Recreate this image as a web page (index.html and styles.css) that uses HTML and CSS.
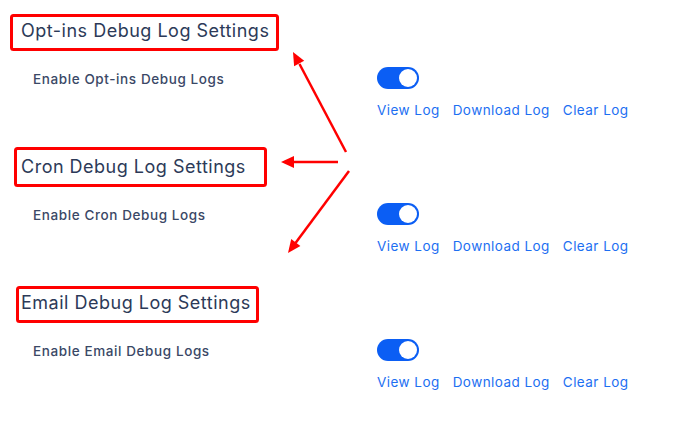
FILE: index.html
```html
<!DOCTYPE html>
<html lang="en">
<head>
<meta charset="utf-8">
<title>Debug Log Settings</title>
<link rel="stylesheet" href="styles.css">
</head>
<body>
<main class="page">
  <section class="group">
    <h2 class="group-title">Opt-ins Debug Log Settings</h2>
    <div class="setting">
      <span class="setting-label">Enable Opt-ins Debug Logs</span>
      <div class="setting-control">
        <span class="toggle is-on"><span class="knob"></span></span>
        <div class="log-links"><a href="#">View Log</a><a href="#">Download Log</a><a href="#">Clear Log</a></div>
      </div>
    </div>
  </section>
  <section class="group">
    <h2 class="group-title">Cron Debug Log Settings</h2>
    <div class="setting">
      <span class="setting-label">Enable Cron Debug Logs</span>
      <div class="setting-control">
        <span class="toggle is-on"><span class="knob"></span></span>
        <div class="log-links"><a href="#">View Log</a><a href="#">Download Log</a><a href="#">Clear Log</a></div>
      </div>
    </div>
  </section>
  <section class="group">
    <h2 class="group-title">Email Debug Log Settings</h2>
    <div class="setting">
      <span class="setting-label">Enable Email Debug Logs</span>
      <div class="setting-control">
        <span class="toggle is-on"><span class="knob"></span></span>
        <div class="log-links"><a href="#">View Log</a><a href="#">Download Log</a><a href="#">Clear Log</a></div>
      </div>
    </div>
  </section>

  <svg class="annotations" width="693" height="430" viewBox="0 0 693 430" aria-hidden="true">
    <g fill="none" stroke="#ff0000" stroke-width="3">
      <rect x="11.5" y="15.5" width="266" height="34" rx="2"/>
      <rect x="15.5" y="148.5" width="250" height="37" rx="2"/>
      <rect x="17.5" y="287.5" width="240" height="34" rx="2"/>
    </g>
    <g stroke="#ff0000" stroke-width="2.5" stroke-linecap="butt">
      <line x1="346" y1="152" x2="299.5" y2="64"/>
      <line x1="338" y1="162" x2="293" y2="162"/>
      <line x1="349" y1="171" x2="295.5" y2="243"/>
    </g>
    <g fill="#ff0000">
      <polygon points="293,52 304.2,60.8 294.1,66.2"/>
      <polygon points="281,162 294,156 294,168"/>
      <polygon points="288,253 300.4,246 291.2,239"/>
    </g>
  </svg>
</main>
</body>
</html>
```

FILE: styles.css
```css
* { box-sizing: border-box; }

html, body {
  margin: 0;
  background: #ffffff;
}

body {
  font-family: "Inter", "Open Sans", "Liberation Sans", sans-serif;
  color: #2f3b57;
}

.page {
  position: relative;
  width: 693px;
  height: 430px;
  padding-top: 17px;
}

.group {
  margin-bottom: 33px;
}

.group-title {
  margin: 0 0 22px 21px;
  font-size: 18px;
  line-height: 28px;
  font-weight: 400;
  letter-spacing: 0.5px;
  color: #2c3a58;
}

.setting {
  display: flex;
  align-items: flex-start;
  padding-left: 33px;
}

.setting-label {
  width: 344px;
  flex: none;
  padding-top: 1px;
  font-size: 13.5px;
  line-height: 22px;
  font-weight: 500;
  letter-spacing: 0.6px;
  color: #3a4866;
}

.setting-control {
  display: flex;
  flex-direction: column;
  align-items: flex-start;
}

.toggle {
  display: flex;
  align-items: center;
  width: 42px;
  height: 22px;
  border-radius: 11px;
  background: #cbd5e1;
  padding: 2px;
}

.toggle.is-on {
  background: #0b5ef4;
  justify-content: flex-end;
}

.knob {
  width: 18px;
  height: 18px;
  border-radius: 50%;
  background: #ffffff;
}

.log-links {
  display: flex;
  gap: 13px;
  margin-top: 11px;
  font-size: 13.5px;
  line-height: 20px;
  letter-spacing: 0.45px;
}

.log-links a {
  color: #1d6ff2;
  text-decoration: none;
}

.annotations {
  position: absolute;
  left: 0;
  top: 0;
  pointer-events: none;
}
```
